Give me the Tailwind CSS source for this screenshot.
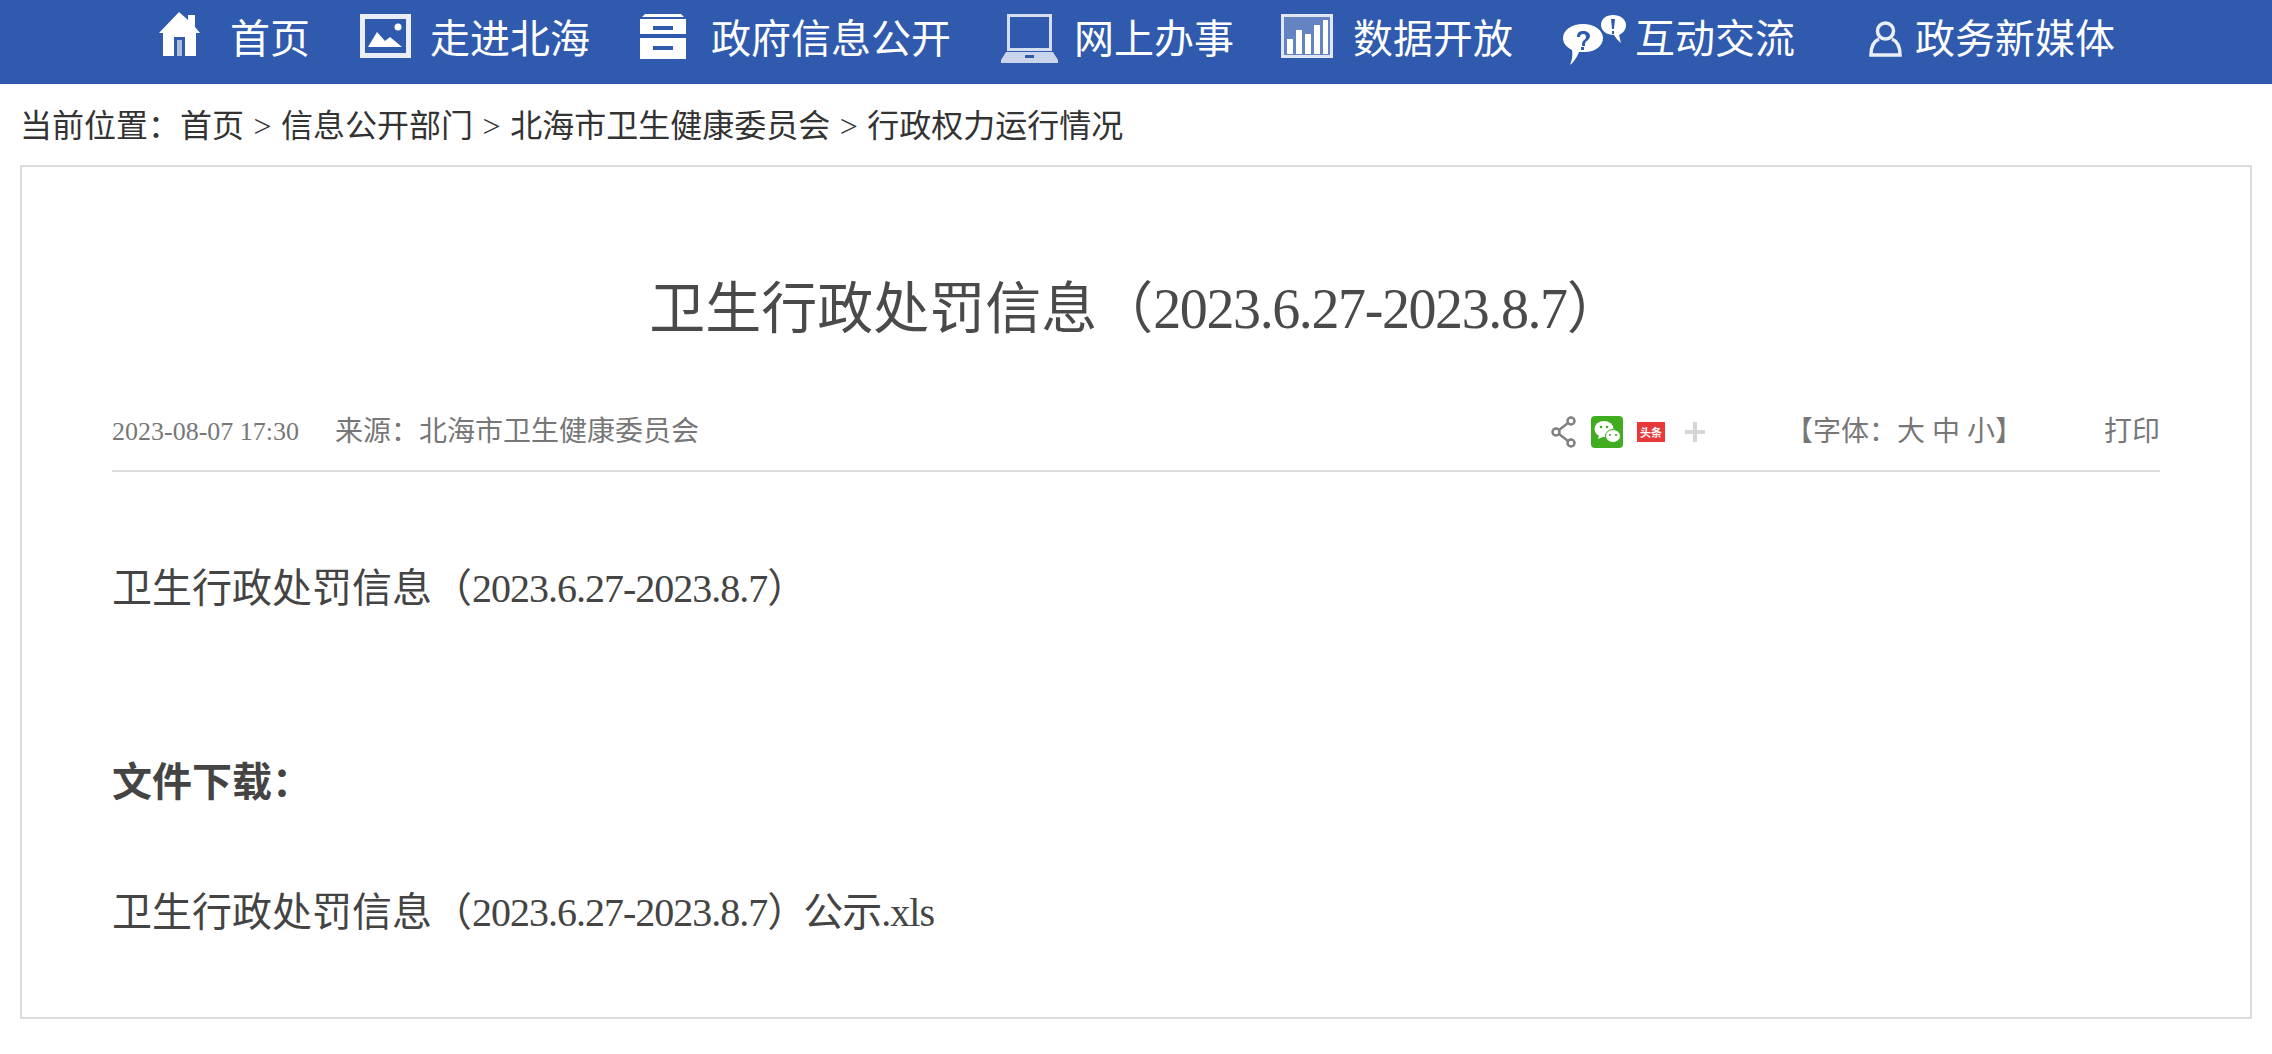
<!doctype html>
<html lang="zh">
<head>
<meta charset="utf-8">
<script src="https://cdn.jsdelivr.net/npm/@tailwindcss/browser@4"></script>
</head>
<body class="bg-white font-['Liberation_Serif','Noto_Sans_CJK_SC',serif]">
<nav class="h-[84px] bg-[#2f5aae] flex items-start pl-[159px] text-white text-[40px] leading-[80px]">
  <a class="flex items-start">
    <svg class="w-[41px] h-[44px] mt-[12px] blur-[0.5px]" viewBox="0 0 41 44" fill="#fff"><path fill-rule="evenodd" d="M20 0 29 8V3h7v12l5 6h-4v23H4V21H0zM15 25v19h11V25z"/><path fill-opacity=".6" d="M18 28h5v16h-5z"/></svg>
    <span class="ml-[30px]">首页</span>
  </a>
  <a class="flex items-start ml-[50px]">
    <svg class="w-[51px] h-[44px] mt-[14px] blur-[0.4px]" viewBox="0 0 51 44" fill="#fff"><path fill-rule="evenodd" fill-opacity=".9" d="M0 0h51v44H0zM5 5v34h41V5z"/><path d="M8 33 17 18l8 9 5-4 12 10z"/><circle cx="38" cy="13" r="3.5"/></svg>
    <span class="ml-[19px]">走进北海</span>
  </a>
  <a class="flex items-start ml-[50px]">
    <svg class="w-[46px] h-[45px] mt-[14px] blur-[0.4px]" viewBox="0 0 46 45" fill="#fff"><path d="M5 0h36l3 3H2z"/><path fill-rule="evenodd" d="M0 5h46v15H0zM13 12v4h20v-4z"/><path fill-rule="evenodd" d="M0 24h46v21H0zM13 32v4h20v-4z"/></svg>
    <span class="ml-[25px]">政府信息公开</span>
  </a>
  <a class="flex items-start ml-[50px]">
    <svg class="w-[57px] h-[49px] mt-[14px] blur-[0.4px]" viewBox="0 0 57 49" fill="#fff"><path fill-rule="evenodd" fill-opacity=".8" d="M6 0h45v37H6zM9 3v31h39V3z"/><path fill-opacity=".75" d="M5 38h47l5 8v3H0v-3zM24 41v3h9v-3z" fill-rule="evenodd"/></svg>
    <span class="ml-[16px]">网上办事</span>
  </a>
  <a class="flex items-start ml-[47px]">
    <svg class="w-[52px] h-[44px] mt-[14px] blur-[0.4px]" viewBox="0 0 52 44"><rect width="52" height="44" fill="#fff" fill-opacity=".25"/><path fill="#fff" fill-opacity=".8" fill-rule="evenodd" d="M0 0h52v44H0zM3 3v38h46V3z"/><path fill="#fff" d="M6 25h6v15H6zM15 16h6v24h-6zM24 20h6v20h-6zM33 11h6v29h-6zM42 6h5v34h-5z"/></svg>
    <span class="ml-[20px]">数据开放</span>
  </a>
  <a class="flex items-start ml-[50px]">
    <svg class="w-[63px] h-[52px] mt-[14px] blur-[0.5px]" viewBox="0 0 63 52" fill="#fff"><path fill-rule="evenodd" d="M20 10c11 0 20 6 20 14 0 8-8 14-18 14-3 0-5 0-6 0-2 5-5 10-9 13 2-5 3-10 2-15C3 33 0 29 0 24 0 16 9 10 20 10zM20 17c-4 0-6 2-6 6h3c0-2 1-3 3-3s3 1 3 3c0 3-4 3-4 7v2h3v-2c0-3 5-4 5-8 0-3-3-5-7-5zm-2 16v3h3v-3z"/><path fill-rule="evenodd" d="M50 1c7 0 13 4 13 10 0 5-3 8-7 10 1 3 1 5 2 8-3-2-5-5-7-8-7 0-13-4-13-10C38 5 43 1 50 1zM48 5l1 10h2l1-10zM49 17v3h2v-3z"/></svg>
    <span class="ml-[9px]">互动交流</span>
  </a>
  <a class="flex items-start ml-[74px]">
    <svg class="w-[33px] h-[36px] mt-[21px] blur-[0.4px]" viewBox="0 0 33 36" fill="none" stroke="#fff" stroke-opacity=".9" stroke-width="3.5"><circle cx="16.500" cy="10" r="8"/><path d="M10 18C5 20 2 26 2 34h29c0-8-3-14-8-16"/></svg>
    <span class="ml-[13px]">政务新媒体</span>
  </a>
</nav>
<div class="h-[81px] pl-[20px] flex items-center pt-[2px] text-[32px] text-[#333]">当前位置&#xFF1A;首页<span class="mx-[9.5px]">&gt;</span>信息公开部门<span class="mx-[9.5px]">&gt;</span>北海市卫生健康委员会<span class="mx-[9.5px]">&gt;</span>行政权力运行情况</div>
<main class="mx-[20px] h-[854px] border-2 border-[#dcdcdc] px-[90px] text-[#444]">
  <h1 class="mt-[106px] text-center text-[56px] leading-[72px] text-[#4a4a4a] font-normal">卫生行政处罚信息&#xFF08;<span class="tracking-[-0.025em]">2023.6.27-2023.8.7</span>&#xFF09;</h1>
  <div class="mt-[67px] h-[60px] border-b-2 border-[#dcdcdc] flex items-start text-[#777] text-[28px] leading-[40px]">
    <span class="text-[26px]">2023-08-07 17:30</span>
    <span class="ml-[36px]">来源&#xFF1A;北海市卫生健康委员会</span>
    <div class="ml-auto flex items-center h-[40px]">
      <svg class="w-[25px] h-[32px]" viewBox="0 0 25 32" fill="none" stroke="#808080" stroke-width="2.5"><circle cx="20" cy="5" r="3.5"/><circle cx="5" cy="16" r="3.5"/><circle cx="20" cy="27" r="3.5"/><path d="M8 14 17 7M8 18l9 7"/></svg>
      <svg class="ml-[15px] w-[32px] h-[32px]" viewBox="0 0 32 32"><rect width="32" height="32" rx="4" fill="#3fad1f"/><ellipse cx="13" cy="13" rx="9.5" ry="8" fill="#fff"/><path d="M8 19l-1 4 5-2z" fill="#fff"/><ellipse cx="22" cy="20" rx="7.5" ry="6.5" fill="#fff" stroke="#3fad1f"/><circle cx="10" cy="11" r="1.3" fill="#3fad1f"/><circle cx="16" cy="11" r="1.3" fill="#3fad1f"/><circle cx="19" cy="19" r="1.1" fill="#3fad1f"/><circle cx="25" cy="19" r="1.1" fill="#3fad1f"/></svg>
      <span class="ml-[14px] w-[28px] h-[20px] bg-[#e8383a] text-white text-[11px] leading-[20px] text-center font-bold whitespace-nowrap font-['Noto_Sans_CJK_SC',sans-serif]">头条</span>
      <svg class="ml-[20px] w-[20px] h-[20px]" viewBox="0 0 20 20" fill="#d6d6d6"><path d="M8 0h4v8h8v4h-8v8H8v-8H0V8h8z"/></svg>
      <span class="ml-[80px] whitespace-pre">&#x3010;字体&#xFF1A;大 中 小&#x3011;</span>
      <span class="ml-[81px]">打印</span>
    </div>
  </div>
  <p class="mt-[92px] text-[40px] leading-[50px]">卫生行政处罚信息&#xFF08;<span class="tracking-[-0.025em]">2023.6.27-2023.8.7</span>&#xFF09;</p>
  <p class="mt-[144px] text-[40px] leading-[50px] font-bold">文件下载&#xFF1A;</p>
  <p class="mt-[80px] text-[40px] leading-[50px]">卫生行政处罚信息&#xFF08;<span class="tracking-[-0.025em]">2023.6.27-2023.8.7</span>&#xFF09;<span class="-ml-[4px] tracking-[-0.025em]">公示.xls</span></p>
</main>
</body>
</html>
